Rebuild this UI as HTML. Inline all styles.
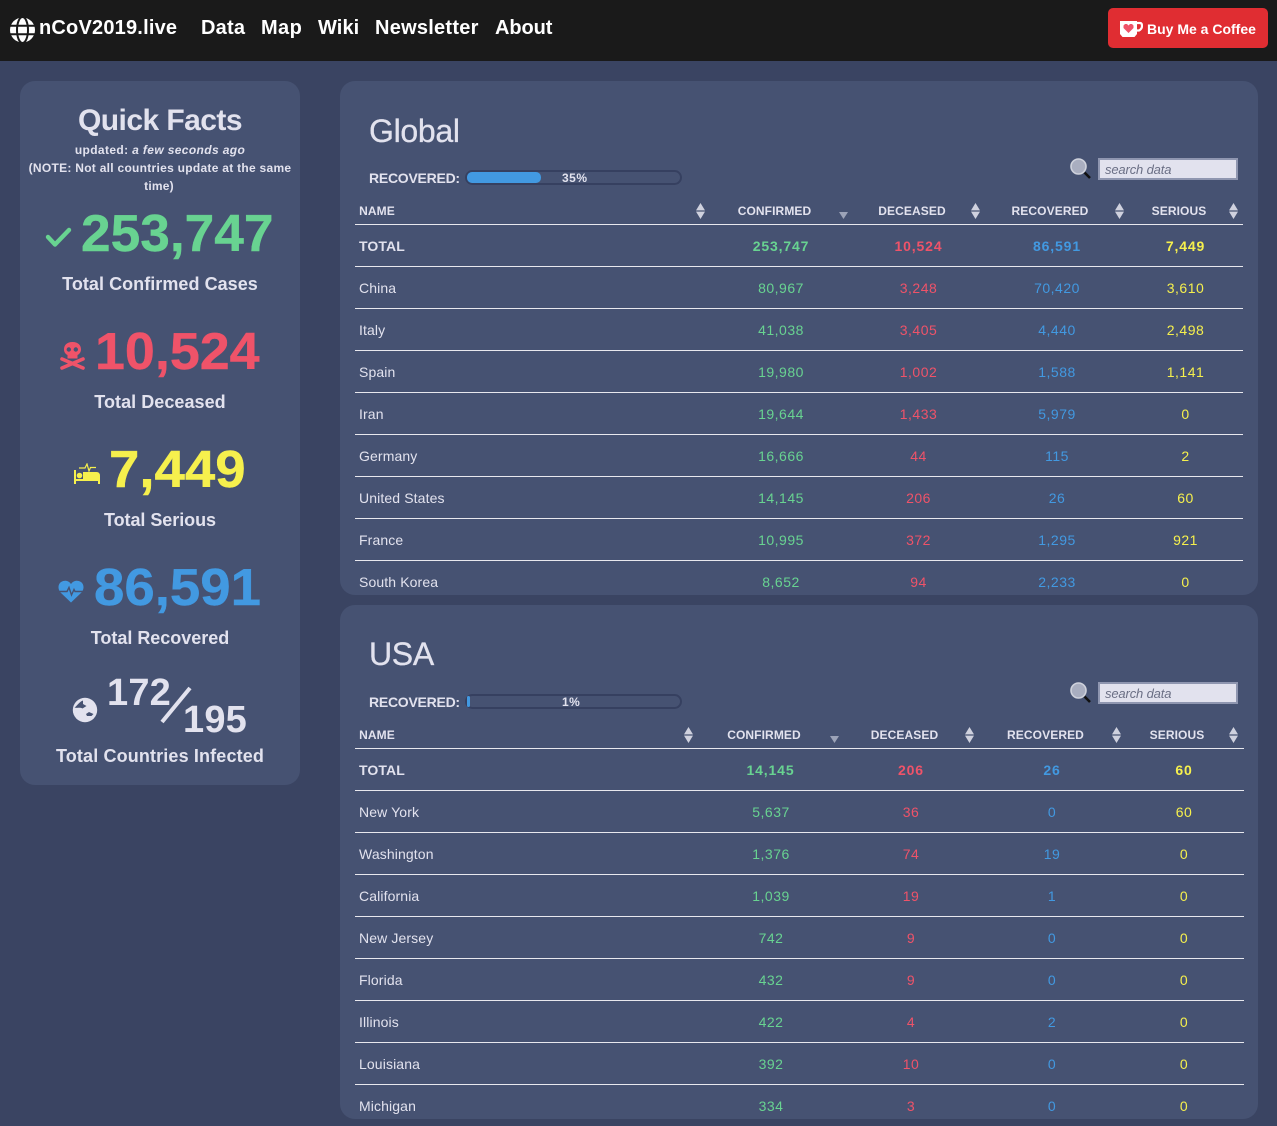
<!DOCTYPE html>
<html><head><meta charset="utf-8"><title>nCoV2019.live</title>
<style>
*{box-sizing:border-box}
html,body{margin:0;padding:0}
body{width:1277px;height:1126px;background:#3a4462;font-family:"Liberation Sans",sans-serif;color:#e2e2ee;position:relative;overflow:hidden}
.a{position:absolute;white-space:nowrap}
.nav{left:0;top:0;width:1277px;height:61px;background:#1a1a1a}
.nl{top:14px;font-size:20px;line-height:28px;font-weight:700;color:#fff}
.btn{left:1108px;top:8px;width:160px;height:40px;background:#e02d32;border-radius:5px;color:#fff;font-weight:700;font-size:14px;line-height:43px;padding-left:39px}
.side{left:20px;top:81px;width:280px;height:704px;background:#465272;border-radius:15px}
.c{left:0;width:280px;text-align:center;color:#e2e2ee}
.big{font-weight:700;font-size:52px;line-height:60px;transform-origin:0 50%;-webkit-text-stroke:.4px currentColor}
.lbl{font-size:18px;font-weight:700;line-height:24px}
.panel{left:340px;width:918px;height:514px;background:#465272;border-radius:15px;overflow:hidden}
.h{left:29px;top:30px;font-size:32px;line-height:40px;letter-spacing:-.3px;-webkit-text-stroke:.3px #e2e2ee}
.rl{left:29px;top:88px;font-size:14px;font-weight:700;line-height:18px;letter-spacing:-.25px}
.bar{left:125px;top:89px;width:217px;height:15px;border:2px solid #364060;border-radius:8px}
.fill{left:0;top:0;height:11px;background:#4299e1;border-radius:5px}
.pct{top:90px;font-size:12px;font-weight:700;line-height:14px;letter-spacing:.5px}
.s{left:758px;top:77px;width:140px;height:22px;background:#e2e2ee;border:2px solid #8f96b0;font-size:13px;font-style:italic;color:#6b6f85;line-height:20px;padding-left:5px;letter-spacing:-.15px}
.th{top:122px;font-size:12px;font-weight:700;line-height:16px;letter-spacing:.1px;transform:translateX(-50%)}
.ln{left:15px;height:1px;background:#e8e8ee}
.n{left:19px;font-size:14px;line-height:20px;letter-spacing:.12px}
.v{font-size:14px;line-height:20px;transform:translateX(-50%);letter-spacing:.5px}
.b{font-weight:700}
.v.b{letter-spacing:.85px}
.g{color:#68d391}.r{color:#ef5369}.u{color:#4299e1}.y{color:#f6f04d}
</style></head><body>
<div class="a nav"></div>
<svg class="a" style="left:10px;top:17px" width="25" height="26" viewBox="0 0 25 26"><circle cx="12.500" cy="13" r="12.500" fill="#fff"/><g fill="none" stroke="#1a1a1a" stroke-width="2"><ellipse cx="12.500" cy="13" rx="5.500" ry="13"/><path d="M0 8.800H25M0 17.200H25"/></g></svg>
<div class="a nl" style="left:39px;letter-spacing:.2px">nCoV2019.live</div>
<div class="a nl" style="left:201px;letter-spacing:.2px">Data</div>
<div class="a nl" style="left:261px;letter-spacing:.4px">Map</div>
<div class="a nl" style="left:318px;letter-spacing:.1px">Wiki</div>
<div class="a nl" style="left:375px;letter-spacing:.25px">Newsletter</div>
<div class="a nl" style="left:495px;letter-spacing:-.1px">About</div>
<div class="a btn">Buy Me a Coffee</div>
<svg class="a" style="left:1119px;top:20px" width="24" height="17" viewBox="0 0 24 17"><path d="M1 1H18V14L15.500 17H3.500L1 14Z" fill="#fff"/><path d="M18 3H21Q23 3 23 6T20 10.500H18" fill="none" stroke="#fff" stroke-width="2.200"/><path d="M9.500 13L4.500 8V5.500L6 4H8L9.500 5.500L11 4H13L14.500 5.500V8Z" fill="#ef5369"/></svg>

<div class="a side"></div>
<div class="a c" style="left:20px;top:103px;font-size:30px;font-weight:700;line-height:36px;letter-spacing:-.55px">Quick Facts</div>
<div class="a c" style="left:20px;top:141px;font-size:12px;font-weight:700;line-height:18px;letter-spacing:.37px">updated: <i>a few seconds ago</i></div>
<div class="a c" style="left:20px;top:159px;font-size:12px;font-weight:700;line-height:18px;letter-spacing:.28px">(NOTE: Not all countries update at the same</div>
<div class="a c" style="left:19px;top:177px;font-size:12px;font-weight:700;line-height:18px;letter-spacing:.2px">time)</div>

<svg class="a" style="left:45px;top:226px" width="27" height="22" viewBox="0 0 27 22"><path d="M3 11L10 18.500L24 4" fill="none" stroke="#68d391" stroke-width="4.400" stroke-linecap="round" stroke-linejoin="round"/></svg>
<div class="a big g" style="left:81px;top:204px;transform:scaleX(1.024)">253,747</div>
<div class="a c lbl" style="left:20px;top:272px;letter-spacing:.05px">Total Confirmed Cases</div>

<svg class="a" style="left:59px;top:341px" width="27" height="30" viewBox="0 0 27 30"><path d="M13.500 1C7.500 1 5 4.500 5 8.500C5 11 6.500 13 8.500 14V17.500H18.500V14C20.500 13 22 11 22 8.500C22 4.500 19.500 1 13.500 1Z" fill="#ef5369"/><circle cx="9.800" cy="8.500" r="2.200" fill="#465272"/><circle cx="16.800" cy="8.500" r="2.200" fill="#465272"/><path d="M3 18L24 27M24 18L3 27" stroke="#ef5369" stroke-width="3.600" stroke-linecap="round"/></svg>
<div class="a big r" style="left:95px;top:322px;transform:scaleX(1.035)">10,524</div>
<div class="a c lbl" style="left:20px;top:390px;letter-spacing:.05px">Total Deceased</div>

<svg class="a" style="left:73px;top:463px" width="28" height="23" viewBox="0 0 28 23"><path d="M1 7V21H3V18H25V21H27V13Q27 9 23.500 9H10V16H3V7Z" fill="#f6f04d"/><circle cx="6.500" cy="12.500" r="2.800" fill="#f6f04d"/><path d="M6 5H12L14 1L16 8L17.500 4.500H23" fill="none" stroke="#f6f04d" stroke-width="1.200"/></svg>
<div class="a big y" style="left:109px;top:440px;transform:scaleX(1.05)">7,449</div>
<div class="a c lbl" style="left:20px;top:508px;letter-spacing:-.05px">Total Serious</div>

<svg class="a" style="left:58px;top:580px" width="26" height="23" viewBox="0 0 26 23"><path d="M13 22.500L2.500 12.500C-.5 9 0 4 3 2C7-.5 11 1 13 4C15 1 19-.5 23 2C26 4 26.500 9 23.500 12.500Z" fill="#4299e1"/><path d="M0 11.500H9L11 7.500L13.500 15L16 9.500L17 11.500H26" fill="none" stroke="#465272" stroke-width="1.400"/></svg>
<div class="a big u" style="left:94px;top:558px;transform:scaleX(1.05)">86,591</div>
<div class="a c lbl" style="left:20px;top:626px;letter-spacing:-.02px">Total Recovered</div>

<svg class="a" style="left:72px;top:697px" width="26" height="26" viewBox="0 0 26 26"><circle cx="13" cy="13" r="12.200" fill="#e2e2ee"/><path d="M2.500 10.500C5 9 7 5 11 3.500L11 7L14.500 9L10.500 11.500C8 10 5 11.500 2.500 10.500ZM14 17L17 15L21.500 17L19.500 19H15Z" fill="#465272"/></svg>
<div class="a b" style="left:107px;top:674px;font-size:38px;line-height:38px;letter-spacing:.2px">172</div>
<svg class="a" style="left:160px;top:685px" width="32" height="40" viewBox="0 0 32 40"><path d="M2 37L30 3" stroke="#e2e2ee" stroke-width="4"/></svg>
<div class="a b" style="left:183px;top:701px;font-size:38px;line-height:38px;letter-spacing:.2px">195</div>
<div class="a c lbl" style="left:20px;top:744px;letter-spacing:.14px">Total Countries Infected</div>

<!-- GLOBAL -->
<div class="a panel" style="top:81px">
<div class="a h">Global</div>
<div class="a rl">RECOVERED:</div>
<div class="a bar"><div class="a fill" style="width:74px"></div></div>
<div class="a pct" style="left:222px">35%</div>
<svg class="a" style="left:730px;top:77px" width="22" height="22" viewBox="0 0 22 22"><path d="M14.500 14.500L20 20" stroke="#111" stroke-width="2.600"/><circle cx="8.500" cy="8.500" r="7.500" fill="#a9aec0" stroke="#cfd2dc" stroke-width="1.600"/></svg>
<div class="a s">search data</div>
<div class="a th" style="left:37px">NAME</div>
<div class="a th" style="left:434.500px">CONFIRMED</div>
<div class="a th" style="left:572px">DECEASED</div>
<div class="a th" style="left:710px">RECOVERED</div>
<div class="a th" style="left:839px">SERIOUS</div>
<svg class="a" style="left:356px;top:122px" width="9" height="16" viewBox="0 0 9 16"><path d="M4.500 0L9 7.400H0ZM0 8.600H9L4.500 16Z" fill="#cfd1de"/></svg>
<svg class="a" style="left:499px;top:131px" width="9" height="7" viewBox="0 0 9 7"><path d="M0 0H9L4.500 7Z" fill="#9ca3b8"/></svg>
<svg class="a" style="left:631px;top:122px" width="9" height="16" viewBox="0 0 9 16"><path d="M4.500 0L9 7.400H0ZM0 8.600H9L4.500 16Z" fill="#cfd1de"/></svg>
<svg class="a" style="left:775px;top:122px" width="9" height="16" viewBox="0 0 9 16"><path d="M4.500 0L9 7.400H0ZM0 8.600H9L4.500 16Z" fill="#cfd1de"/></svg>
<svg class="a" style="left:889px;top:122px" width="9" height="16" viewBox="0 0 9 16"><path d="M4.500 0L9 7.400H0ZM0 8.600H9L4.500 16Z" fill="#cfd1de"/></svg>
<div class="a ln" style="top:143px;width:888px"></div>
<div class="a ln" style="top:185px;width:888px"></div>
<div class="a ln" style="top:227px;width:888px"></div>
<div class="a ln" style="top:269px;width:888px"></div>
<div class="a ln" style="top:311px;width:888px"></div>
<div class="a ln" style="top:353px;width:888px"></div>
<div class="a ln" style="top:395px;width:888px"></div>
<div class="a ln" style="top:437px;width:888px"></div>
<div class="a ln" style="top:479px;width:888px"></div>

<div class="a n b" style="top:155px">TOTAL</div><div class="a v b g" style="left:441px;top:155px">253,747</div><div class="a v b r" style="left:578.500px;top:155px">10,524</div><div class="a v b u" style="left:717px;top:155px">86,591</div><div class="a v b y" style="left:845.500px;top:155px">7,449</div>
<div class="a n" style="top:197px">China</div><div class="a v g" style="left:441px;top:197px">80,967</div><div class="a v r" style="left:578.500px;top:197px">3,248</div><div class="a v u" style="left:717px;top:197px">70,420</div><div class="a v y" style="left:845.500px;top:197px">3,610</div>
<div class="a n" style="top:239px">Italy</div><div class="a v g" style="left:441px;top:239px">41,038</div><div class="a v r" style="left:578.500px;top:239px">3,405</div><div class="a v u" style="left:717px;top:239px">4,440</div><div class="a v y" style="left:845.500px;top:239px">2,498</div>
<div class="a n" style="top:281px">Spain</div><div class="a v g" style="left:441px;top:281px">19,980</div><div class="a v r" style="left:578.500px;top:281px">1,002</div><div class="a v u" style="left:717px;top:281px">1,588</div><div class="a v y" style="left:845.500px;top:281px">1,141</div>
<div class="a n" style="top:323px">Iran</div><div class="a v g" style="left:441px;top:323px">19,644</div><div class="a v r" style="left:578.500px;top:323px">1,433</div><div class="a v u" style="left:717px;top:323px">5,979</div><div class="a v y" style="left:845.500px;top:323px">0</div>
<div class="a n" style="top:365px">Germany</div><div class="a v g" style="left:441px;top:365px">16,666</div><div class="a v r" style="left:578.500px;top:365px">44</div><div class="a v u" style="left:717px;top:365px">115</div><div class="a v y" style="left:845.500px;top:365px">2</div>
<div class="a n" style="top:407px">United States</div><div class="a v g" style="left:441px;top:407px">14,145</div><div class="a v r" style="left:578.500px;top:407px">206</div><div class="a v u" style="left:717px;top:407px">26</div><div class="a v y" style="left:845.500px;top:407px">60</div>
<div class="a n" style="top:449px">France</div><div class="a v g" style="left:441px;top:449px">10,995</div><div class="a v r" style="left:578.500px;top:449px">372</div><div class="a v u" style="left:717px;top:449px">1,295</div><div class="a v y" style="left:845.500px;top:449px">921</div>
<div class="a n" style="top:491px">South Korea</div><div class="a v g" style="left:441px;top:491px">8,652</div><div class="a v r" style="left:578.500px;top:491px">94</div><div class="a v u" style="left:717px;top:491px">2,233</div><div class="a v y" style="left:845.500px;top:491px">0</div>
</div>

<!-- USA -->
<div class="a panel" style="top:605px">
<div class="a h" style="top:29px">USA</div>
<div class="a rl">RECOVERED:</div>
<div class="a bar"><div class="a fill" style="width:3px;border-radius:2px"></div></div>
<div class="a pct" style="left:222px">1%</div>
<svg class="a" style="left:730px;top:77px" width="22" height="22" viewBox="0 0 22 22"><path d="M14.500 14.500L20 20" stroke="#111" stroke-width="2.600"/><circle cx="8.500" cy="8.500" r="7.500" fill="#a9aec0" stroke="#cfd2dc" stroke-width="1.600"/></svg>
<div class="a s">search data</div>
<div class="a th" style="left:37px">NAME</div>
<div class="a th" style="left:424px">CONFIRMED</div>
<div class="a th" style="left:564.500px">DECEASED</div>
<div class="a th" style="left:705.500px">RECOVERED</div>
<div class="a th" style="left:837px">SERIOUS</div>
<svg class="a" style="left:344px;top:122px" width="9" height="16" viewBox="0 0 9 16"><path d="M4.500 0L9 7.400H0ZM0 8.600H9L4.500 16Z" fill="#cfd1de"/></svg>
<svg class="a" style="left:490px;top:131px" width="9" height="7" viewBox="0 0 9 7"><path d="M0 0H9L4.500 7Z" fill="#9ca3b8"/></svg>
<svg class="a" style="left:625px;top:122px" width="9" height="16" viewBox="0 0 9 16"><path d="M4.500 0L9 7.400H0ZM0 8.600H9L4.500 16Z" fill="#cfd1de"/></svg>
<svg class="a" style="left:772px;top:122px" width="9" height="16" viewBox="0 0 9 16"><path d="M4.500 0L9 7.400H0ZM0 8.600H9L4.500 16Z" fill="#cfd1de"/></svg>
<svg class="a" style="left:889px;top:122px" width="9" height="16" viewBox="0 0 9 16"><path d="M4.500 0L9 7.400H0ZM0 8.600H9L4.500 16Z" fill="#cfd1de"/></svg>
<div class="a ln" style="top:143px;width:889px"></div>
<div class="a ln" style="top:185px;width:889px"></div>
<div class="a ln" style="top:227px;width:889px"></div>
<div class="a ln" style="top:269px;width:889px"></div>
<div class="a ln" style="top:311px;width:889px"></div>
<div class="a ln" style="top:353px;width:889px"></div>
<div class="a ln" style="top:395px;width:889px"></div>
<div class="a ln" style="top:437px;width:889px"></div>
<div class="a ln" style="top:479px;width:889px"></div>

<div class="a n b" style="top:155px">TOTAL</div><div class="a v b g" style="left:430.500px;top:155px">14,145</div><div class="a v b r" style="left:571px;top:155px">206</div><div class="a v b u" style="left:712px;top:155px">26</div><div class="a v b y" style="left:844px;top:155px">60</div>
<div class="a n" style="top:197px">New York</div><div class="a v g" style="left:431px;top:197px">5,637</div><div class="a v r" style="left:571px;top:197px">36</div><div class="a v u" style="left:712px;top:197px">0</div><div class="a v y" style="left:844px;top:197px">60</div>
<div class="a n" style="top:239px">Washington</div><div class="a v g" style="left:431px;top:239px">1,376</div><div class="a v r" style="left:571px;top:239px">74</div><div class="a v u" style="left:712px;top:239px">19</div><div class="a v y" style="left:844px;top:239px">0</div>
<div class="a n" style="top:281px">California</div><div class="a v g" style="left:431px;top:281px">1,039</div><div class="a v r" style="left:571px;top:281px">19</div><div class="a v u" style="left:712px;top:281px">1</div><div class="a v y" style="left:844px;top:281px">0</div>
<div class="a n" style="top:323px">New Jersey</div><div class="a v g" style="left:431px;top:323px">742</div><div class="a v r" style="left:571px;top:323px">9</div><div class="a v u" style="left:712px;top:323px">0</div><div class="a v y" style="left:844px;top:323px">0</div>
<div class="a n" style="top:365px">Florida</div><div class="a v g" style="left:431px;top:365px">432</div><div class="a v r" style="left:571px;top:365px">9</div><div class="a v u" style="left:712px;top:365px">0</div><div class="a v y" style="left:844px;top:365px">0</div>
<div class="a n" style="top:407px">Illinois</div><div class="a v g" style="left:431px;top:407px">422</div><div class="a v r" style="left:571px;top:407px">4</div><div class="a v u" style="left:712px;top:407px">2</div><div class="a v y" style="left:844px;top:407px">0</div>
<div class="a n" style="top:449px">Louisiana</div><div class="a v g" style="left:431px;top:449px">392</div><div class="a v r" style="left:571px;top:449px">10</div><div class="a v u" style="left:712px;top:449px">0</div><div class="a v y" style="left:844px;top:449px">0</div>
<div class="a n" style="top:491px">Michigan</div><div class="a v g" style="left:431px;top:491px">334</div><div class="a v r" style="left:571px;top:491px">3</div><div class="a v u" style="left:712px;top:491px">0</div><div class="a v y" style="left:844px;top:491px">0</div>
</div>
</body></html>
